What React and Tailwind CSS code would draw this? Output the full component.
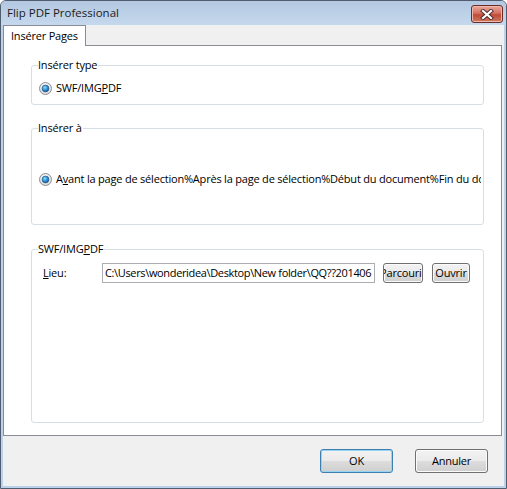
import React from 'react';

const Radio = () => (
  <svg width="13" height="13" viewBox="0 0 13 13" className="shrink-0">
    <defs>
      <radialGradient id="rbg" cx="50%" cy="35%" r="70%">
        <stop offset="0%" stopColor="#ffffff" />
        <stop offset="100%" stopColor="#d4d4d4" />
      </radialGradient>
      <radialGradient id="rdot" cx="40%" cy="35%" r="70%">
        <stop offset="0%" stopColor="#8fdcff" />
        <stop offset="55%" stopColor="#2e8fd8" />
        <stop offset="100%" stopColor="#14508f" />
      </radialGradient>
    </defs>
    <circle cx="6.5" cy="6.5" r="6" fill="url(#rbg)" stroke="#8c8f94" strokeWidth="1" />
    <circle cx="6.5" cy="6.5" r="3.4" fill="url(#rdot)" stroke="#1d4f7d" strokeWidth="0.6" />
  </svg>
);

const WinButton = ({ children, className = '', isDefault = false }) => (
  <button
    type="button"
    className={
      'flex items-center justify-center overflow-hidden whitespace-nowrap rounded-[3px] border bg-[linear-gradient(#f2f2f2,#ebebeb_50%,#dddddd_50%,#cfcfcf)] text-[11px] text-black ' +
      (isDefault
        ? 'border-[#3c7fb1] shadow-[inset_0_0_0_1px_#97d4f3] '
        : 'border-[#707070] shadow-[inset_0_0_0_1px_#fbfbfb] ') +
      className
    }
  >
    {children}
  </button>
);

const Group = ({ label, className = '', children }) => (
  <div className={'relative ml-[27px] w-[453px] rounded-[3px] border border-[#d5dfe5] ' + className}>
    <span className="absolute left-[6px] top-[-9px] whitespace-nowrap bg-white pr-[1px] leading-[16px]">{label}</span>
    {children}
  </div>
);

export default function App() {
  return (
    <div className="flex h-[489px] w-[507px] flex-col overflow-hidden rounded-t-[6px] border border-[#4f5d6e] bg-[#bcd2ea] font-['Open_Sans',sans-serif] text-[11px] tracking-[-0.2px] text-black">
      {/* title bar */}
      <div className="flex h-[24px] shrink-0 items-start justify-between bg-[linear-gradient(#b3c8e1,#c5d8ed)] pl-[6px] pr-[3px]">
        <span className="pt-[4px] text-[11.5px] leading-[16px] tracking-normal text-[#1b1b1b]">Flip PDF Professional</span>
        <div className="mt-[4px] flex h-[18px] w-[32px] items-center justify-center rounded-[3px] border border-[#6b2b27] bg-[linear-gradient(#e9a99c,#d4705f_45%,#c04a37_55%,#cf7a62)] shadow-[inset_0_0_0_1px_#efb8ad]">
          <svg width="14" height="11" viewBox="0 0 14 11">
            <path d="M3 2 L11 9 M11 2 L3 9" stroke="#4b2a2a" strokeWidth="4" strokeLinecap="square" />
            <path d="M3 2 L11 9 M11 2 L3 9" stroke="#ffffff" strokeWidth="2.2" strokeLinecap="square" />
          </svg>
        </div>
      </div>

      {/* client area */}
      <div className="mx-[2px] mb-[2px] flex flex-1 flex-col bg-[#f0f0f0]">
        {/* tabs */}
        <div className="flex h-[20px] shrink-0 items-end">
          <div className="relative z-10 -mb-px flex h-[21px] w-[83px] items-center whitespace-nowrap border border-b-0 border-[#898c95] bg-white pl-[7px]">
            Insérer Pages
          </div>
        </div>

        {/* tab panel */}
        <div className="mr-[2px] flex h-[391px] flex-col border border-[#898c95] bg-white">
          <Group label="Insérer type" className="mt-[19px] h-[40px]">
            <div className="mt-[14px] flex h-[16px] items-center gap-[4px] pl-[7px]">
              <Radio />
              <span className="leading-[16px]">
                SWF/IMG<span className="underline">P</span>DF
              </span>
            </div>
          </Group>

          <Group label="Insérer à" className="mt-[23px] h-[97px]">
            <div className="mt-[42px] flex h-[16px] w-[449px] items-center gap-[4px] overflow-hidden pl-[7px]">
              <Radio />
              <span className="whitespace-nowrap leading-[16px]">
                A<span className="underline">v</span>ant la page de sélection%Après la page de sélection%Début du document%Fin du document
              </span>
            </div>
          </Group>

          <Group
            label={
              <>
                SWF/IMG<span className="underline">P</span>DF
              </>
            }
            className="mt-[24px] h-[174px]"
          >
            <div className="mt-[13px] flex h-[20px] items-center">
              <span className="w-[70px] shrink-0 pl-[11px] leading-[16px]">
                <span className="underline">L</span>ieu:
              </span>
              <div className="flex h-[20px] w-[273px] shrink-0 items-center overflow-hidden whitespace-nowrap border border-[#abadb3] pl-[2px] leading-[16px] tracking-[-0.35px]">
                C:\Users\wonderidea\Desktop\New folder\QQ??201406
              </div>
              <WinButton className="ml-[8px] h-[20px] w-[40px] shrink-0">Parcourir</WinButton>
              <WinButton className="ml-[9px] h-[20px] w-[38px] shrink-0">Ouvrir</WinButton>
            </div>
          </Group>
        </div>

        {/* footer */}
        <div className="flex flex-1 items-center justify-end gap-[22px] pr-[16px]">
          <WinButton isDefault className="h-[24px] w-[73px]">OK</WinButton>
          <WinButton className="h-[24px] w-[73px]">Annuler</WinButton>
        </div>
      </div>
    </div>
  );
}
